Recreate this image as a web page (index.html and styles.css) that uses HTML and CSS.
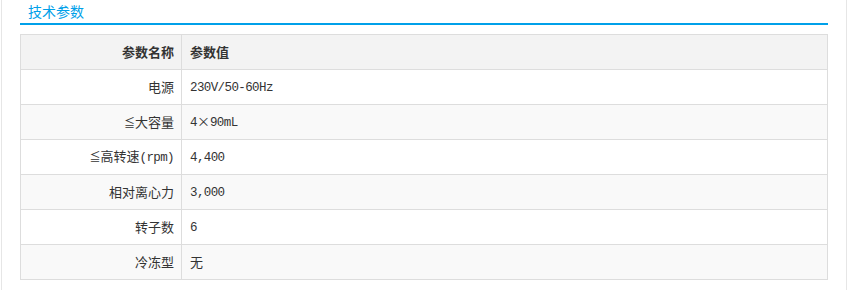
FILE: index.html
```html
<!DOCTYPE html>
<html lang="zh">
<head>
<meta charset="utf-8">
<link rel="stylesheet" href="styles.css">
</head>
<body>
<div class="wrap">
  <div class="title"><span class="title-text">技术参数</span></div>
  <table class="params">
    <tr class="head"><th class="k">参数名称</th><th class="v">参数值</th></tr>
    <tr><td class="k">电源</td><td class="v"><span class="num">230V/50-60Hz</span></td></tr>
    <tr class="alt"><td class="k"><span class="sym">≦</span>大容量</td><td class="v"><span class="num">4</span>×<span class="num">90mL</span></td></tr>
    <tr><td class="k"><span class="sym">≦</span>高转速<span class="num">(rpm)</span></td><td class="v"><span class="num">4,400</span></td></tr>
    <tr class="alt"><td class="k">相对离心力</td><td class="v"><span class="num">3,000</span></td></tr>
    <tr><td class="k">转子数</td><td class="v"><span class="num">6</span></td></tr>
    <tr class="alt"><td class="k">冷冻型</td><td class="v">无</td></tr>
  </table>
</div>
</body>
</html>
```
FILE: styles.css
```css
html, body {
  margin: 0;
  padding: 0;
  background: #fff;
}
body {
  font-family: "Noto Sans CJK SC", "Liberation Sans", sans-serif;
  font-size: 13px;
  color: #333;
}
.wrap {
  margin-left: 1px;
  width: 808px;
  padding: 0 18px 20px;
  border-left: 1px solid #e6e6e6;
  border-right: 1px solid #e6e6e6;
  min-height: 270px;
}
.title {
  height: 23px;
  border-bottom: 2px solid #00a0e9;
  display: flex;
  align-items: center;
  padding-left: 8px;
}
.title-text {
  color: #00a0e9;
  font-size: 14px;
  line-height: 23px;
}
.params {
  margin-top: 9px;
  width: 808px;
  border-collapse: collapse;
  table-layout: fixed;
}
.params th, .params td {
  border: 1px solid #dddddd;
  height: 34px;
  padding: 0;
  line-height: 16px;
  color: #333;
}
.params .k {
  width: 153px;
  text-align: right;
  padding-right: 7px;
}
.params .v {
  text-align: left;
  padding-left: 8px;
}
.params th {
  font-weight: bold;
  background: #f3f3f3;
}
.params tr.alt td {
  background: #f9f9f9;
}
.num {
  font-family: "Liberation Mono", monospace;
  font-size: 12.5px;
  letter-spacing: -0.6px;
}
.sym {
  font-size: 11px;
}
```
